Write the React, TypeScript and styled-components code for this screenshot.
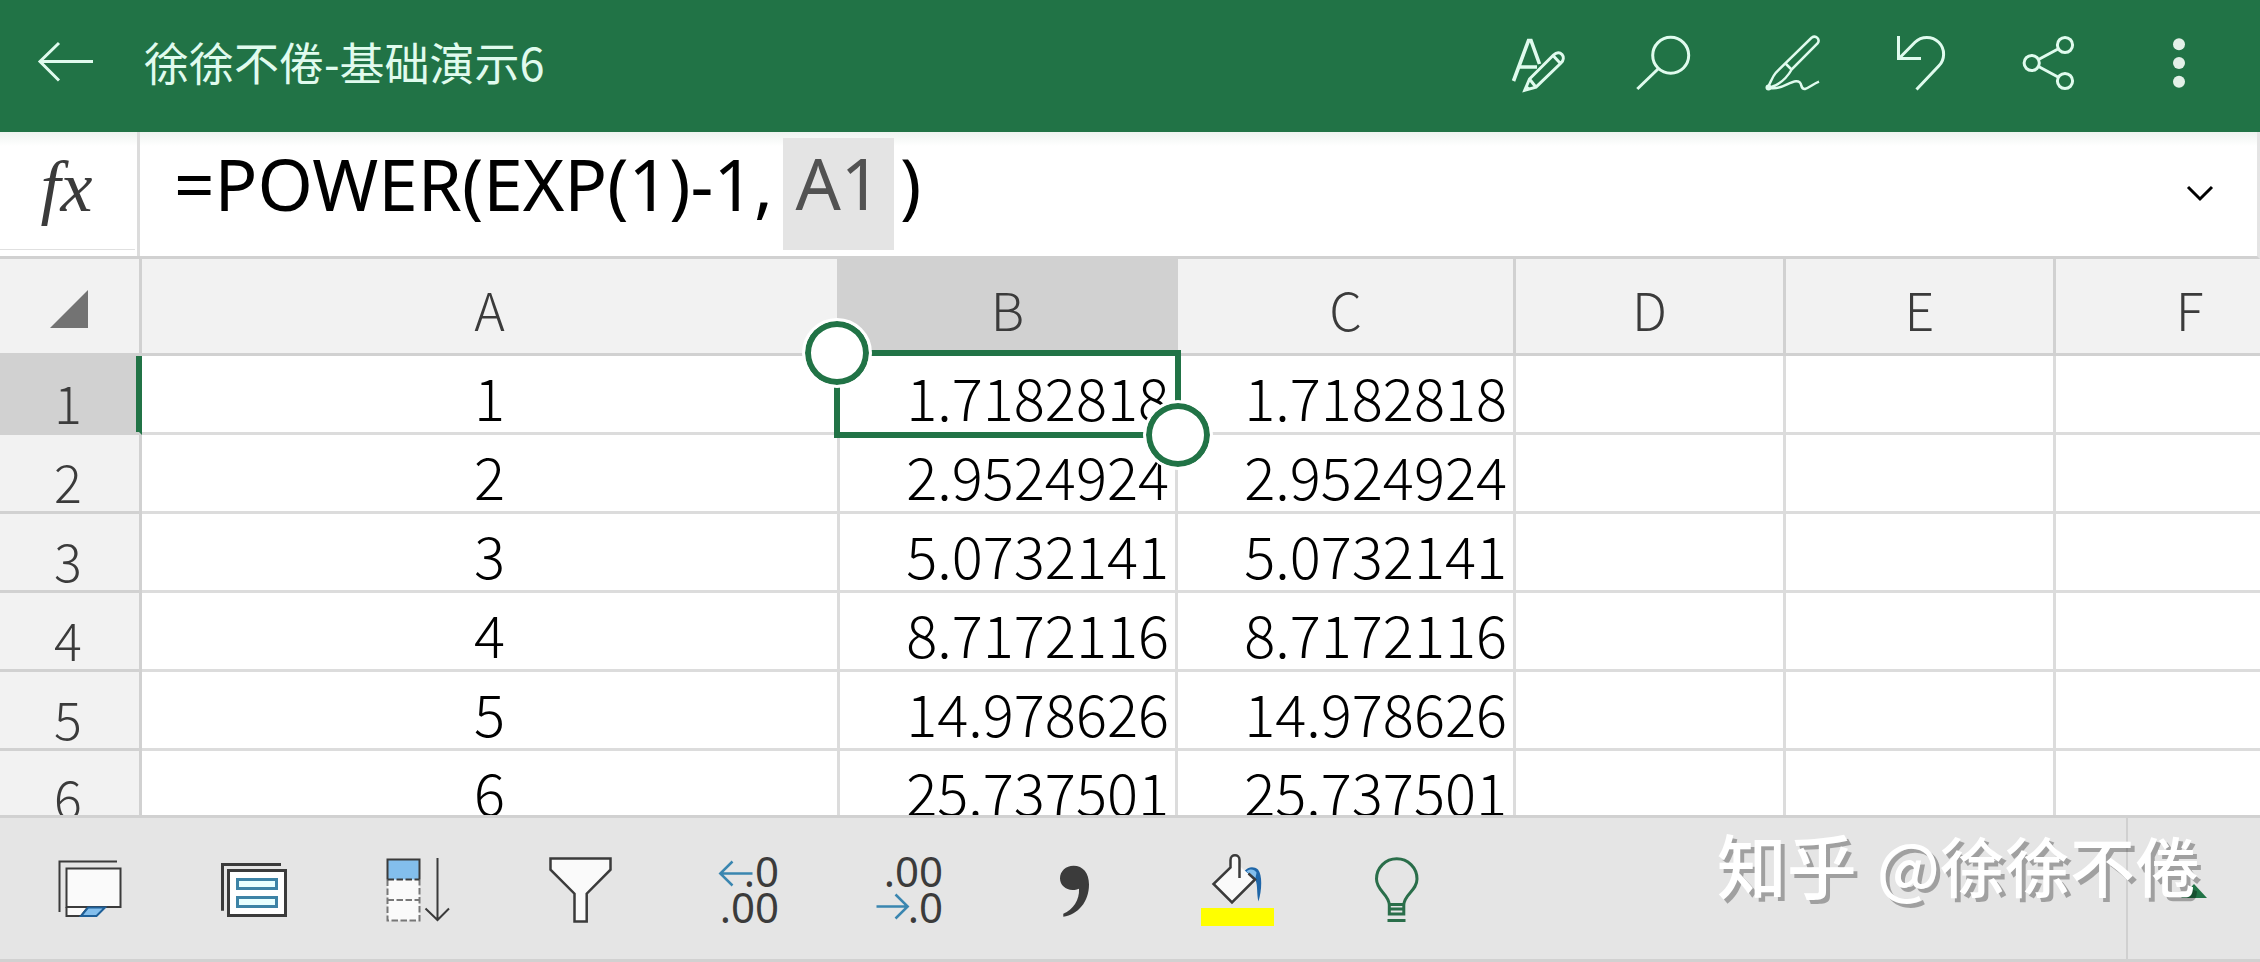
import React from "react";
import styled, { createGlobalStyle } from "styled-components";

const green = "#217346";
const line = "#d1d1d1";
const ink = "#3b3b3b";
const blue = "#3a86b0";
const cjk = '"Noto Sans CJK SC", "Noto Sans", sans-serif';
const latin = '"Noto Sans", "Noto Sans CJK SC", sans-serif';

const GlobalStyle = createGlobalStyle`
  * { box-sizing: border-box; }
  body { margin: 0; background: #fff; font-family: ${cjk}; }
  button { border: 0; padding: 0; background: none; font: inherit; color: inherit; cursor: pointer; }
  svg { display: block; flex: none; }
`;

const Page = styled.div`
  display: flex;
  flex-direction: column;
  height: 100vh;
  overflow: hidden;
`;

const Header = styled.header`
  display: flex;
  align-items: center;
  flex: none;
  height: 132px;
  padding: 0 18px;
  background: ${green};
  color: #e0fbee;
`;

const Title = styled.h1`
  flex: 1;
  margin: 0 0 0 30px;
  font-size: 45px;
  line-height: 60px;
  font-weight: 400;
  padding-bottom: 8px;
`;

const HeaderButton = styled.button<{ $width?: number }>`
  display: flex;
  align-items: center;
  justify-content: center;
  width: ${(p) => p.$width ?? 128}px;
  height: 100%;
`;

const FormulaBar = styled.div`
  display: flex;
  flex: none;
  height: 127px;
  border-bottom: 3px solid ${line};
  border-right: 3px solid #e4e4e4;
  background: linear-gradient(#eef3f0, #fff 14px);
`;

const FxSlot = styled.div`
  width: 140px;
  border-right: 3px solid #dcdcdc;
  padding-right: 2px;
`;

const FxButton = styled.button`
  width: 100%;
  height: 118px;
  padding: 0 2px 8px 0;
  border-bottom: 1px solid #e0e0e0;
  font-family: "Liberation Serif", serif;
  font-style: italic;
  font-size: 72px;
  line-height: 80px;
  color: ${ink};
`;

const FormulaField = styled.div`
  display: flex;
  flex: 1;
  align-items: center;
  gap: 6px;
  padding-left: 34px;
  font-family: ${latin};
  font-size: 71px;
  line-height: 90px;
`;

const FormulaInput = styled.input<{ $width?: number }>`
  ${(p) => (p.$width ? `width: ${p.$width}px;` : "flex: 1; min-width: 0;")}
  height: 112px;
  border: 0;
  outline: 0;
  padding: 0 0 22px;
  background: none;
  font: inherit;
  color: #000;
`;

const Reference = styled.button`
  width: 111px;
  height: 112px;
  padding-bottom: 22px;
  background: #e4e4e4;
  color: #525252;
`;

const ExpandButton = styled.button`
  display: flex;
  align-items: center;
  justify-content: center;
  width: 114px;
`;

const SheetPane = styled.main`
  flex: 1;
  min-height: 0;
  overflow: hidden;
`;

const Sheet = styled.table`
  width: 2326px;
  table-layout: fixed;
  border-collapse: separate;
  border-spacing: 0;
`;

const ColHead = styled.th<{ $active?: boolean }>`
  height: 97px;
  padding: 6px 0 0;
  border-right: 3px solid ${line};
  border-bottom: 3px solid ${line};
  background: ${(p) => (p.$active ? line : "#f2f2f2")};
  color: ${ink};
  font-size: 52px;
  line-height: 70px;
  font-weight: 300;
`;

const SelectAll = styled.button`
  display: flex;
  align-items: center;
  justify-content: flex-end;
  width: 100%;
  padding-right: 51px;
`;

const RowHead = styled.th<{ $active?: boolean }>`
  height: 79px;
  padding: 15px 3px 0 0;
  border-right: 3px solid ${line};
  border-bottom: 3px solid ${line};
  background: ${(p) => (p.$active ? line : "#f2f2f2")};
  box-shadow: ${(p) => (p.$active ? `inset -3px 0 ${green}` : "none")};
  ${(p) => (p.$active ? `border-right-color: ${green};` : "")}
  color: ${ink};
  font-size: 52px;
  line-height: 60px;
  font-weight: 300;
`;

const Cell = styled.td<{ $align?: string }>`
  position: relative;
  height: 79px;
  padding: 4px 6px 0;
  border-right: 3px solid #dcdcdc;
  border-bottom: 3px solid #dcdcdc;
  color: #000;
  font-size: 58px;
  line-height: 70px;
  font-weight: 300;
  text-align: ${(p) => p.$align ?? "right"};
`;

const Selection = styled.div`
  position: absolute;
  inset: -6px;
  z-index: 1;
  border: 6px solid ${green};
`;

const Handle = styled.span<{ $end?: boolean }>`
  position: absolute;
  ${(p) => (p.$end ? "right: -38px; bottom: -38px;" : "left: -38px; top: -38px;")}
  width: 70px;
  height: 70px;
  border: 3px solid #fff;
  border-radius: 50%;
  background: #fff;
  box-shadow: inset 0 0 0 6px ${green};
`;

const Toolbar = styled.footer`
  position: relative;
  display: flex;
  flex: none;
  height: 147px;
  padding-left: 8px;
  border-top: 3px solid ${line};
  border-bottom: 3px solid ${line};
  background: #e5e5e5;
`;

const Tool = styled.button`
  display: flex;
  align-items: center;
  justify-content: center;
  width: 164px;
`;

const MoreButton = styled.button`
  display: flex;
  align-items: center;
  justify-content: center;
  width: 134px;
  margin-left: auto;
  padding-top: 4px;
  border-left: 2px solid #d0d0d0;
`;

const Watermark = styled.div`
  position: absolute;
  right: 60px;
  top: 0;
  display: flex;
  align-items: center;
  gap: 20px;
  color: #fff;
  font-size: 65px;
  line-height: 92px;
  font-weight: 500;
  text-shadow: 4px 4px 0 rgba(0, 0, 0, 0.3);
  white-space: nowrap;
  pointer-events: none;
`;

const Brand = styled.strong`
  font-size: 70px;
  font-weight: 500;
`;

const columns = [
  { name: "A", width: 698 },
  { name: "B", width: 338 },
  { name: "C", width: 338 },
  { name: "D", width: 270 },
  { name: "E", width: 270 },
  { name: "F", width: 270 },
];

const values = ["1.7182818", "2.9524924", "5.0732141", "8.7172116", "14.978626", "25.737501"];

const HeaderIcon = ({ children }: { children: React.ReactNode }) => (
  <svg width="64" height="64" viewBox="0 0 64 64" fill="none" stroke="currentColor" strokeWidth="3" aria-hidden="true">
    {children}
  </svg>
);

const ToolIcon = ({ children }: { children: React.ReactNode }) => (
  <svg width="80" height="81" viewBox="0 0 80 81" fill="none" stroke={ink} strokeWidth="2.5" aria-hidden="true">
    {children}
  </svg>
);

const headerActions = [
  {
    label: "格式",
    icon: (
      <>
        <path d="M7.5 47 22.5 6.5h2.5L33.5 30M13.5 33H31" strokeWidth="3.6" />
        <path d="M18.8 56.2 23.5 45 47.5 21C51 17.6 54 18.4 56 20.5C58 23 57.6 26.5 55 29L30 53.2ZM23.5 45 30 53.2M47 21.5 54.5 29.5" />
        <path d="M18.5 57 20.5 51 25 55Z" fill="currentColor" stroke="none" />
      </>
    ),
  },
  { label: "查找", icon: <><circle cx="36.7" cy="21.3" r="18" /><path d="M24 35 3.3 55" /></> },
  {
    label: "墨迹",
    icon: (
      <>
        <path d="M6 53C9 48 10 43 14 38.5L49.5 3.8C54 0.5 58.5 5.5 55.5 9.5L30 35C26 42 20 50 8 53.5" strokeWidth="2.5" />
        <path d="M23.5 29.5 30 36M8 54C20 56 26 48 34 47.3C42 47 37 55.5 43 55C47 54 51 50 57 47.7" strokeWidth="2.5" />
        <circle cx="6.5" cy="53.5" r="3" fill="currentColor" stroke="none" />
      </>
    ),
  },
  { label: "撤消", icon: <path d="M8.5 2V24.5H31M9.5 24 25 8.3A16.7 16.7 0 0 1 48.7 32L26.5 55.5" /> },
  {
    label: "共享",
    icon: (
      <>
        <circle cx="13.7" cy="29" r="7.6" />
        <circle cx="47" cy="11" r="7.6" />
        <circle cx="47" cy="47" r="7.6" />
        <path d="M20.5 25.5 40 15M20.5 32.5 40 43" />
      </>
    ),
  },
  {
    label: "更多",
    icon: (
      <g fill="#e3f0e8" stroke="none">
        <circle cx="33" cy="10.3" r="6" />
        <circle cx="33" cy="29" r="6" />
        <circle cx="33" cy="47.7" r="6" />
      </g>
    ),
  },
];

const DecimalText = ({ y, children }: { y: number; children: string }) => (
  <text x="73" y={y} textAnchor="end" fill={ink} stroke="none" fontFamily="Noto Sans, sans-serif" fontSize="42">
    {children}
  </text>
);

const tools = [
  {
    label: "工作表",
    icon: (
      <>
        <path d="M67 13.5H9.5V64" strokeWidth="2" />
        <path d="M16.5 59V68H31L38 59" fill="#fafafa" strokeWidth="2" />
        <rect x="16.5" y="20.5" width="54" height="38.5" fill="#fafafa" strokeWidth="2" />
        <path d="M38 59.5H55L46.5 68H31Z" fill="#83beec" stroke="#1e5f98" strokeWidth="2" />
      </>
    ),
  },
  {
    label: "卡片视图",
    icon: (
      <>
        <path d="M67 16.5H8.5V62.7" strokeWidth="3" />
        <rect x="14.5" y="22.5" width="57" height="45" fill="#fff" strokeWidth="3" />
        <path d="M23.5 31.5H62.5V40.5H23.5ZM23.5 49.5H62.5V58.5H23.5Z" fill="#e8ffff" stroke="#3d83a6" strokeWidth="3" />
      </>
    ),
  },
  {
    label: "填充",
    icon: (
      <>
        <rect x="9.5" y="31" width="32" height="41.5" fill="#fafafa" stroke="none" />
        <path d="M9.5 31.5V72.5H41.5V31.5M9.5 52H41.5" stroke="#777" strokeWidth="2" strokeDasharray="6.5 2.5" />
        <path d="M9.5 31.5V11.5H41.5V31.5" fill="#83beec" strokeWidth="2" />
        <path d="M9.5 31.5H41.5" strokeWidth="2" strokeDasharray="6.5 2.5" />
        <path d="M59.5 10V72M47.5 60.5 59.5 72 71 60.5" strokeWidth="2" />
      </>
    ),
  },
  { label: "筛选", icon: <path d="M8.5 10.5H68.5V21.7L44.7 45.7V73.5H32.5V45.7L8.5 21.7Z" fill="#fafafa" /> },
  {
    label: "增加小数位数",
    icon: (
      <>
        <DecimalText y={39}>.0</DecimalText>
        <DecimalText y={75}>.00</DecimalText>
        <path d="M46.5 25.5H14M26.5 13.5 14.3 25.5 26.5 37.5" stroke={blue} />
      </>
    ),
  },
  {
    label: "减少小数位数",
    icon: (
      <>
        <DecimalText y={39}>.00</DecimalText>
        <DecimalText y={75}>.0</DecimalText>
        <path d="M6.5 58.5H38M25.5 46.5 37.7 58.5 25.5 70.5" stroke={blue} />
      </>
    ),
  },
  {
    label: "千位分隔样式",
    icon: (
      <path
        d="M39.5 17.7C49 17.7 55 25 55 36.5C55 54 44 66.5 29.3 68.7V65.7C39 62 45.7 52 45 40.8C43 41.6 41 42 38.5 42C31.5 42 26 37 26 30.3C26 23 32 17.7 39.5 17.7Z"
        fill={ink}
        stroke="none"
      />
    ),
  },
  {
    label: "填充颜色",
    icon: (
      <>
        <rect x="3" y="60" width="73" height="18" fill="#ff0" stroke="none" />
        <path d="M46.5 23C50 18.5 56 18 60 21.5C64.5 27 64 42 60.5 53.5C58.5 46 60 38 57.5 32Z" fill="#1f66a8" stroke="none" />
        <path d="M48.5 23.5C52 20.5 56 21 58.5 24.5L57.5 30Z" fill="#83beec" stroke="none" />
        <path d="M41.5 18 57 31.5 34 54.5 15.5 36 32.5 19.5V12C32.5 5.8 41.5 5.8 41.5 12Z" fill="#fafafa" stroke="none" />
        <path d="M41.5 30V12C41.5 5.8 32.5 5.8 32.5 12V19.5L15.5 36 34 54.5 57 31.5 50.5 25.5" />
      </>
    ),
  },
  {
    label: "操作说明搜索",
    icon: (
      <path
        d="M27.3 66V57C27 46 14.5 43 14.5 31A20.2 20.2 0 0 1 55 31C55 43 42 46 41.8 57V66ZM27.3 56.5H41.8M27.3 61H41.8M25.5 72.5H43.5"
        stroke="#2a6e4a"
        strokeWidth="3"
      />
    ),
  },
];

export default function App() {
  return (
    <Page>
      <GlobalStyle />
      <Header>
        <HeaderButton $width={96} aria-label="返回">
          <HeaderIcon>
            <path d="M59 27.5H6M25 9 6 27.5 25 46.5" />
          </HeaderIcon>
        </HeaderButton>
        <Title>徐徐不倦-基础演示6</Title>
        {headerActions.map((action) => (
          <HeaderButton key={action.label} aria-label={action.label}>
            <HeaderIcon>{action.icon}</HeaderIcon>
          </HeaderButton>
        ))}
      </Header>

      <FormulaBar>
        <FxSlot>
          <FxButton aria-label="插入函数">fx</FxButton>
        </FxSlot>
        <FormulaField>
          <FormulaInput $width={603} aria-label="公式" defaultValue="=POWER(EXP(1)-1," />
          <Reference>A1</Reference>
          <FormulaInput aria-label="公式结尾" defaultValue=")" />
        </FormulaField>
        <ExpandButton aria-label="展开编辑栏">
          <svg width="30" height="20" viewBox="0 0 30 20" fill="none" stroke="#000" strokeWidth="3" aria-hidden="true">
            <path d="M3 3 15 15 27 3" />
          </svg>
        </ExpandButton>
      </FormulaBar>

      <SheetPane>
        <Sheet>
          <colgroup>
            <col width={142} />
            {columns.map((column) => (
              <col key={column.name} width={column.width} />
            ))}
          </colgroup>
          <thead>
            <tr>
              <ColHead>
                <SelectAll aria-label="全选">
                  <svg width="38" height="38" viewBox="0 0 38 38" aria-hidden="true">
                    <path d="M38 0V38H0Z" fill="#737373" />
                  </svg>
                </SelectAll>
              </ColHead>
              {columns.map((column) => (
                <ColHead key={column.name} scope="col" $active={column.name === "B"}>
                  {column.name}
                </ColHead>
              ))}
            </tr>
          </thead>
          <tbody>
            {values.map((value, index) => (
              <tr key={value}>
                <RowHead scope="row" $active={index === 0}>
                  {index + 1}
                </RowHead>
                <Cell $align="center">{index + 1}</Cell>
                <Cell>
                  {value}
                  {index === 0 && (
                    <Selection>
                      <Handle />
                      <Handle $end />
                    </Selection>
                  )}
                </Cell>
                <Cell>{value}</Cell>
                <Cell />
                <Cell />
                <Cell />
              </tr>
            ))}
          </tbody>
        </Sheet>
      </SheetPane>

      <Toolbar>
        {tools.map((tool) => (
          <Tool key={tool.label} aria-label={tool.label}>
            <ToolIcon>{tool.icon}</ToolIcon>
          </Tool>
        ))}
        <MoreButton aria-label="展开工具栏">
          <svg width="26" height="14" viewBox="0 0 26 14" aria-hidden="true">
            <path d="M13 0 26 14H0Z" fill={green} />
          </svg>
        </MoreButton>
        <Watermark>
          <Brand>知乎</Brand>
          <span>@徐徐不倦</span>
        </Watermark>
      </Toolbar>
    </Page>
  );
}
